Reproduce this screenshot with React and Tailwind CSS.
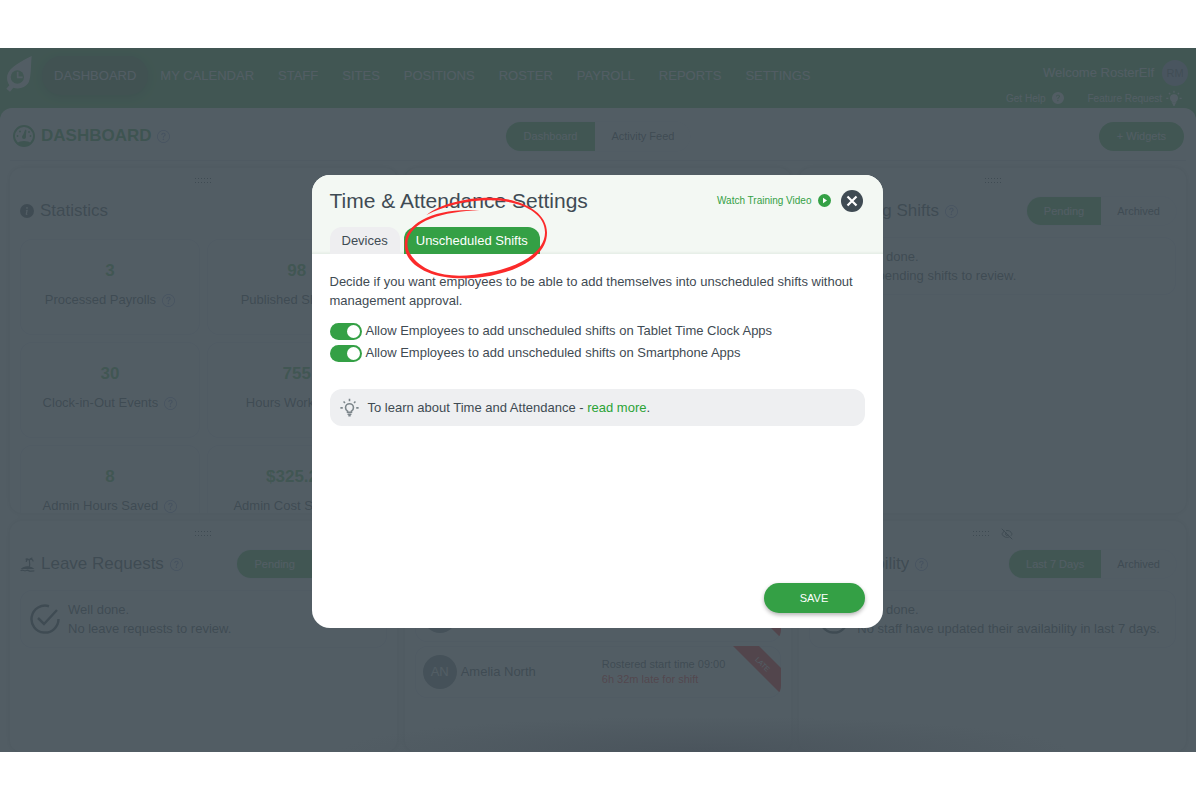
import { BsQuestionCircle, BsQuestionCircleFill, BsInfoCircleFill } from 'react-icons/bs';
import { EyeOff } from 'lucide-react';

const NAV = ['DASHBOARD', 'MY CALENDAR', 'STAFF', 'SITES', 'POSITIONS', 'ROSTER', 'PAYROLL', 'REPORTS', 'SETTINGS'];

const STATS = [
    { value: '3', label: 'Processed Payrolls' },
    { value: '98', label: 'Published Shifts' },
    { value: '30', label: 'Clock-in-Out Events' },
    { value: '755', label: 'Hours Worked' },
    { value: '8', label: 'Admin Hours Saved' },
    { value: '$325.22', label: 'Admin Cost Saved' },
];

const LATE_STAFF = [
    { initials: 'JC', name: 'Jack Cole', start: '09:00', late: '6h 32m' },
    { initials: 'AN', name: 'Amelia North', start: '09:00', late: '6h 32m' },
];

function Logo() {
    return (
        <svg className="h-9 w-7 text-white" viewBox="0 0 84 108" fill="none">
            <path d="M77 0C50 14 10 32 4 58c-2 12 0 22 6 30l-9 10 11 9 10-12c14 5 36 2 46-16C76 60 74 30 77 0Z" fill="currentColor" />
            <circle cx="34" cy="63" r="20" fill="#50b84f" />
            <path d="M35 47v17h15" stroke="currentColor" strokeWidth="5" />
        </svg>
    );
}

function GaugeIcon({ className }) {
    return (
        <svg className={className} viewBox="0 0 24 24" fill="none">
            <circle cx="12" cy="12" r="10" stroke="currentColor" strokeWidth="2" />
            <path d="M5 19a8 4 0 0 1 14 0 10 10 0 0 1-14 0Z" fill="currentColor" />
            <path d="M11 12.500 13.500 6l.5.2-.8 6.800Z" stroke="currentColor" strokeWidth="1" fill="currentColor" />
            <circle cx="12" cy="13" r="2" fill="currentColor" />
            <circle cx="5.500" cy="12" r="1" fill="currentColor" />
            <circle cx="8" cy="7.500" r="1" fill="currentColor" />
            <circle cx="17" cy="8" r="1" fill="currentColor" />
            <circle cx="18.500" cy="12" r="1" fill="currentColor" />
        </svg>
    );
}

function PalmIcon() {
    return (
        <svg className="size-[15px] shrink-0" viewBox="0 0 24 24" fill="none" stroke="currentColor" strokeWidth="2">
            <path d="M14 18c2-4 2-8 1-13" />
            <path d="M10 8c0-4 3-5 5-3 2-3 6-1 6 2M15 5c-3-4-6-1-6-1M15 5c1-4 5-3 5-3" />
            <path d="M4 18c4-3 12-3 16 0H4ZM1 22c3-2 5 0 7 0s4-2 6 0 5 0 9 0" fill="currentColor" />
        </svg>
    );
}

function BulbIcon({ className, filled }) {
    return (
        <svg className={className} viewBox="0 0 24 24" fill="none" stroke="currentColor" strokeWidth="2">
            <path
                d="M9.500 18v-1.500C7.800 15.500 7 14 7 12.200a5 5 0 0 1 10 0c0 1.800-.8 3.300-2.500 4.300V18Z"
                fill={filled ? 'currentColor' : 'none'}
            />
            <path d="M9.500 20.500h5M10.500 22.500h3" />
            <path d="M12 1v3M4.500 4.500l1.800 1.800M19.500 4.500l-1.800 1.800M.5 12.500h3M20.500 12.500h3" />
        </svg>
    );
}

function CheckIcon() {
    return (
        <svg className="size-[30px] shrink-0" viewBox="0 0 30 30" fill="none" stroke="currentColor" strokeWidth="2.500">
            <path d="M19 2.200A13.500 13.500 0 1 0 28.500 15" />
            <path d="m8 14 6 6L27 6" />
        </svg>
    );
}

function DragHandle() {
    return (
        <svg className="h-[6px] w-4" viewBox="0 0 16 6" fill="currentColor">
            {[0, 4].map((y) => [0, 3, 6, 9, 12, 15].map((x) => <rect key={`${x}-${y}`} x={x} y={y} width="1" height="1" />))}
        </svg>
    );
}

function HelpIcon() {
    return <BsQuestionCircle className="size-[13px] text-[#8a94d0]" />;
}

function Segmented({ active, other }) {
    return (
        <div className="flex h-7 shrink-0 overflow-hidden rounded-full bg-[#fbfbff] text-[11px] ring-1 ring-[#eeeefa]">
            <button className="bg-[#50b84f] px-[17px] text-white">{active}</button>
            <button className="px-4">{other}</button>
        </div>
    );
}

function Widget({ icon, title, help, toggle, hidden, children }) {
    return (
        <section className="flex min-w-0 flex-col overflow-hidden rounded-xl bg-white px-[10px] shadow-[0_0_6px_rgba(0,0,0,0.25)]">
            <div className="flex h-[26px] shrink-0 items-center justify-center gap-3">
                <DragHandle />
                {hidden && <EyeOff className="size-3" />}
            </div>
            <div className="mt-[3px] flex h-7 shrink-0 items-center gap-[6px]">
                {icon}
                {title && <h2 className="truncate text-[17px]">{title}</h2>}
                {help && <HelpIcon />}
                {toggle && (
                    <div className="ml-auto">
                        <Segmented active={toggle[0]} other={toggle[1]} />
                    </div>
                )}
            </div>
            <div className="mt-3 min-h-0 flex-1 overflow-hidden">{children}</div>
        </section>
    );
}

function EmptyState({ text }) {
    return (
        <div className="flex h-[58px] items-center gap-2 rounded-xl px-[10px] text-[13px] leading-[19px] ring-1 ring-[#e4e4f4] ring-inset">
            <CheckIcon />
            <p>
                Well done.
                <br />
                {text}
            </p>
        </div>
    );
}

function StatCard({ value, label }) {
    return (
        <div className="flex h-24 flex-col items-center rounded-xl pt-[22px] ring-1 ring-[#e4e4f4] ring-inset">
            <strong className="text-[17px] leading-5 text-[#50b84f]">{value}</strong>
            <span className="mt-[9px] flex items-center gap-[6px] text-[13px] leading-5 whitespace-nowrap">
                {label}
                <HelpIcon />
            </span>
        </div>
    );
}

function LateRow({ initials, name, start, late }) {
    return (
        <li className="relative flex h-[52px] items-center overflow-hidden rounded-xl px-2 ring-1 ring-[#e4e4f4] ring-inset">
            <span className="flex size-[34px] items-center justify-center rounded-full bg-[#7a848b] text-[13px] text-white">
                {initials}
            </span>
            <span className="ml-1 flex-1 text-[13px]">{name}</span>
            <span className="mr-12 text-[11px] leading-[15px]">
                Rostered start time {start}
                <br />
                <span className="text-[#ff2020]">{late} late for shift</span>
            </span>
            <svg className="absolute top-0 right-0 size-12" viewBox="0 0 48 48">
                <path d="M0 0h26l22 22v24h-2Z" fill="#ff1010" />
                <text x="30" y="21" fill="#fff" fontSize="7" textAnchor="middle" transform="rotate(45 30 18)">
                    LATE
                </text>
            </svg>
        </li>
    );
}

function Dashboard() {
    return (
        <div className="flex flex-1 flex-col bg-[#50b84f] text-[#3f4b53]">
            <header className="flex h-[60px] shrink-0 items-start pr-2 pl-[6px] text-white">
                <div className="mt-2">
                    <Logo />
                </div>
                <nav className="mt-2 ml-2 flex h-[39px] items-center">
                    {NAV.map((item, i) => (
                        <a
                            key={item}
                            href="#"
                            className={
                                i === 0
                                    ? 'flex h-full items-center rounded-full bg-[#508a48] px-3 text-[13px] shadow-[0_2px_8px_rgba(0,0,0,0.3)]'
                                    : 'px-3 text-[13px] whitespace-nowrap'
                            }
                        >
                            {item}
                        </a>
                    ))}
                </nav>
                <div className="mt-3 ml-auto">
                    <div className="flex items-center justify-end gap-2 text-[13px]">
                        Welcome RosterElf
                        <span className="flex size-[26px] items-center justify-center rounded-full bg-[#a4acc8] text-[11px] text-[#50606a]">
                            RM
                        </span>
                    </div>
                    <div className="mt-1 flex items-center justify-end gap-6 pr-[6px] text-[10px]">
                        <a href="#" className="flex items-center gap-[6px]">
                            Get Help <BsQuestionCircleFill className="size-3" />
                        </a>
                        <a href="#" className="flex items-center gap-1">
                            Feature Request <BulbIcon className="size-4" filled />
                        </a>
                    </div>
                </div>
            </header>

            <main className="flex flex-1 flex-col rounded-t-xl bg-white">
                <div className="mx-[10px] grid h-[53px] shrink-0 grid-cols-3 items-center border-b border-[#e2e2e6] pt-1">
                    <div className="flex items-center gap-[5px] pl-[2px]">
                        <GaugeIcon className="size-6 text-[#35a043]" />
                        <h1 className="text-[17px] font-bold text-[#35a043]">DASHBOARD</h1>
                        <HelpIcon />
                    </div>
                    <div className="flex justify-center">
                        <div className="flex h-[29px] overflow-hidden rounded-full text-[11px] ring-1 ring-[#f5f5fc]">
                            <button className="bg-[#50b84f] px-[18px] text-white">Dashboard</button>
                            <button className="px-4">Activity Feed</button>
                        </div>
                    </div>
                    <button className="mr-[2px] h-[29px] justify-self-end rounded-full bg-[#50b84f] px-[18px] text-[11px] text-white">
                        + Widgets
                    </button>
                </div>

                <div className="grid flex-1 grid-cols-3 grid-rows-[345px_minmax(229px,1fr)] gap-2 px-[10px] pt-[7px]">
                    <Widget icon={<BsInfoCircleFill className="size-[14px] shrink-0" />} title="Statistics">
                        <div className="grid grid-cols-2 gap-[7px] pt-[2px]">
                            {STATS.map((stat) => (
                                <StatCard key={stat.label} {...stat} />
                            ))}
                        </div>
                    </Widget>
                    <Widget />
                    <Widget icon={<GaugeIcon className="size-[14px] shrink-0" />} title="Pending Shifts" help toggle={['Pending', 'Archived']}>
                        <EmptyState text="No pending shifts to review." />
                    </Widget>
                    <Widget icon={<PalmIcon />} title="Leave Requests" help toggle={['Pending', 'Archived']}>
                        <EmptyState text="No leave requests to review." />
                    </Widget>
                    <Widget>
                        <ul className="space-y-1">
                            {LATE_STAFF.map((row) => (
                                <LateRow key={row.initials} {...row} />
                            ))}
                        </ul>
                    </Widget>
                    <Widget
                        icon={<GaugeIcon className="size-[14px] shrink-0" />}
                        title="Availability"
                        help
                        hidden
                        toggle={['Last 7 Days', 'Archived']}
                    >
                        <EmptyState text="No staff have updated their availability in last 7 days." />
                    </Widget>
                </div>
            </main>
        </div>
    );
}

function Switch({ id, label }) {
    return (
        <div className="flex items-center gap-1">
            <input
                id={id}
                type="checkbox"
                role="switch"
                defaultChecked
                className="h-[17px] w-8 appearance-none rounded-full bg-gray-400 before:block before:size-[13px] before:translate-x-[2px] before:translate-y-[2px] before:rounded-full before:bg-white checked:bg-[#34a045] checked:before:translate-x-[17px]"
            />
            <label htmlFor={id}>{label}</label>
        </div>
    );
}

// hand-drawn ring round the active tab
function MarkerRing() {
    return (
        <svg className="pointer-events-none absolute -top-[34px] -left-px h-[87px] w-[150px]" viewBox="276 69 450 261">
            <path
                d="M346 135C390 100 470 82 540 83C620 84 708 120 708 188C708 250 640 298 540 317C480 328 400 330 350 307C310 290 280 262 281 222C282 160 370 112 505 121C400 124 292 152 289 222C289 256 325 288 362 303C410 322 470 320 540 306C630 288 701 245 702 188C703 125 625 92 540 91C470 90 400 108 346 135Z"
                fill="#fb2a2a"
            />
        </svg>
    );
}

function SettingsModal() {
    return (
        <div
            role="dialog"
            aria-labelledby="modal-title"
            className="flex min-h-[453px] w-full max-w-[571px] flex-col overflow-hidden rounded-[18px] bg-white text-[13px] text-[#3f4b53]"
        >
            <div className="bg-[#f3f8f3] px-[18px] shadow-[inset_0_-3px_3px_-2px_rgba(0,60,20,0.08)]">
                <div className="flex h-[51px] items-center pr-[2px]">
                    <h2 id="modal-title" className="flex-1 text-[21px]">
                        Time &amp; Attendance Settings
                    </h2>
                    <a href="#" className="flex items-center gap-[6px] text-[10px] text-[#34a045]">
                        Watch Training Video
                        <svg className="size-[13px]" viewBox="0 0 13 13">
                            <circle cx="6.500" cy="6.500" r="6.500" fill="currentColor" />
                            <path d="M5 3.800v5.400l4-2.700Z" fill="#fff" />
                        </svg>
                    </a>
                    <button aria-label="Close" className="ml-[10px]">
                        <svg className="size-[22px]" viewBox="0 0 22 22">
                            <circle cx="11" cy="11" r="11" fill="#3f4b53" />
                            <path d="m6.500 6.500 9 9m0-9-9 9" stroke="#fff" strokeWidth="2.200" />
                        </svg>
                    </button>
                </div>
                <div className="mt-px flex gap-1">
                    <button className="h-[27px] rounded-t-xl bg-[#eeeef0] px-3">Devices</button>
                    <div className="relative">
                        <button className="h-[27px] rounded-t-xl bg-[#34a045] px-3 text-white">Unscheduled Shifts</button>
                        <MarkerRing />
                    </div>
                </div>
            </div>

            <div className="flex flex-1 flex-col px-[18px] pt-[18px] pb-[15px]">
                <p className="leading-[19px]">
                    Decide if you want employees to be able to add themselves into unscheduled shifts without management approval.
                </p>
                <div className="mt-[11px] space-y-[2px] leading-5">
                    <Switch id="tablet" label="Allow Employees to add unscheduled shifts on Tablet Time Clock Apps" />
                    <Switch id="phone" label="Allow Employees to add unscheduled shifts on Smartphone Apps" />
                </div>
                <div className="mt-[26px] flex h-[37px] items-center gap-[9px] rounded-xl bg-[#eeeff1] px-[10px]">
                    <BulbIcon className="size-[19px] text-[#7d868b]" />
                    <p>
                        To learn about Time and Attendance -{' '}
                        <a href="#" className="text-[#2aa336]">
                            read more
                        </a>
                        .
                    </p>
                </div>
                <button className="mt-auto h-[30px] w-[101px] self-end rounded-full bg-[#34a045] text-[11px] text-white shadow-[0_2px_4px_rgba(0,0,0,0.3)]">
                    SAVE
                </button>
            </div>
        </div>
    );
}

export default function App() {
    return (
        <div className="flex min-h-screen flex-col bg-white py-12 font-['Liberation_Sans',Arial,sans-serif]">
            <div className="relative mr-1 flex flex-1 flex-col overflow-hidden">
                <Dashboard />
                <div className="absolute inset-0 flex items-start justify-center bg-[#3f4b53]/90 pt-[127px] pr-[2px]">
                    <div className="absolute right-[10%] bottom-0 left-[28%] h-9 bg-[radial-gradient(ellipse_at_bottom,#4a545c,transparent_70%)]" />
                    <SettingsModal />
                </div>
            </div>
        </div>
    );
}
